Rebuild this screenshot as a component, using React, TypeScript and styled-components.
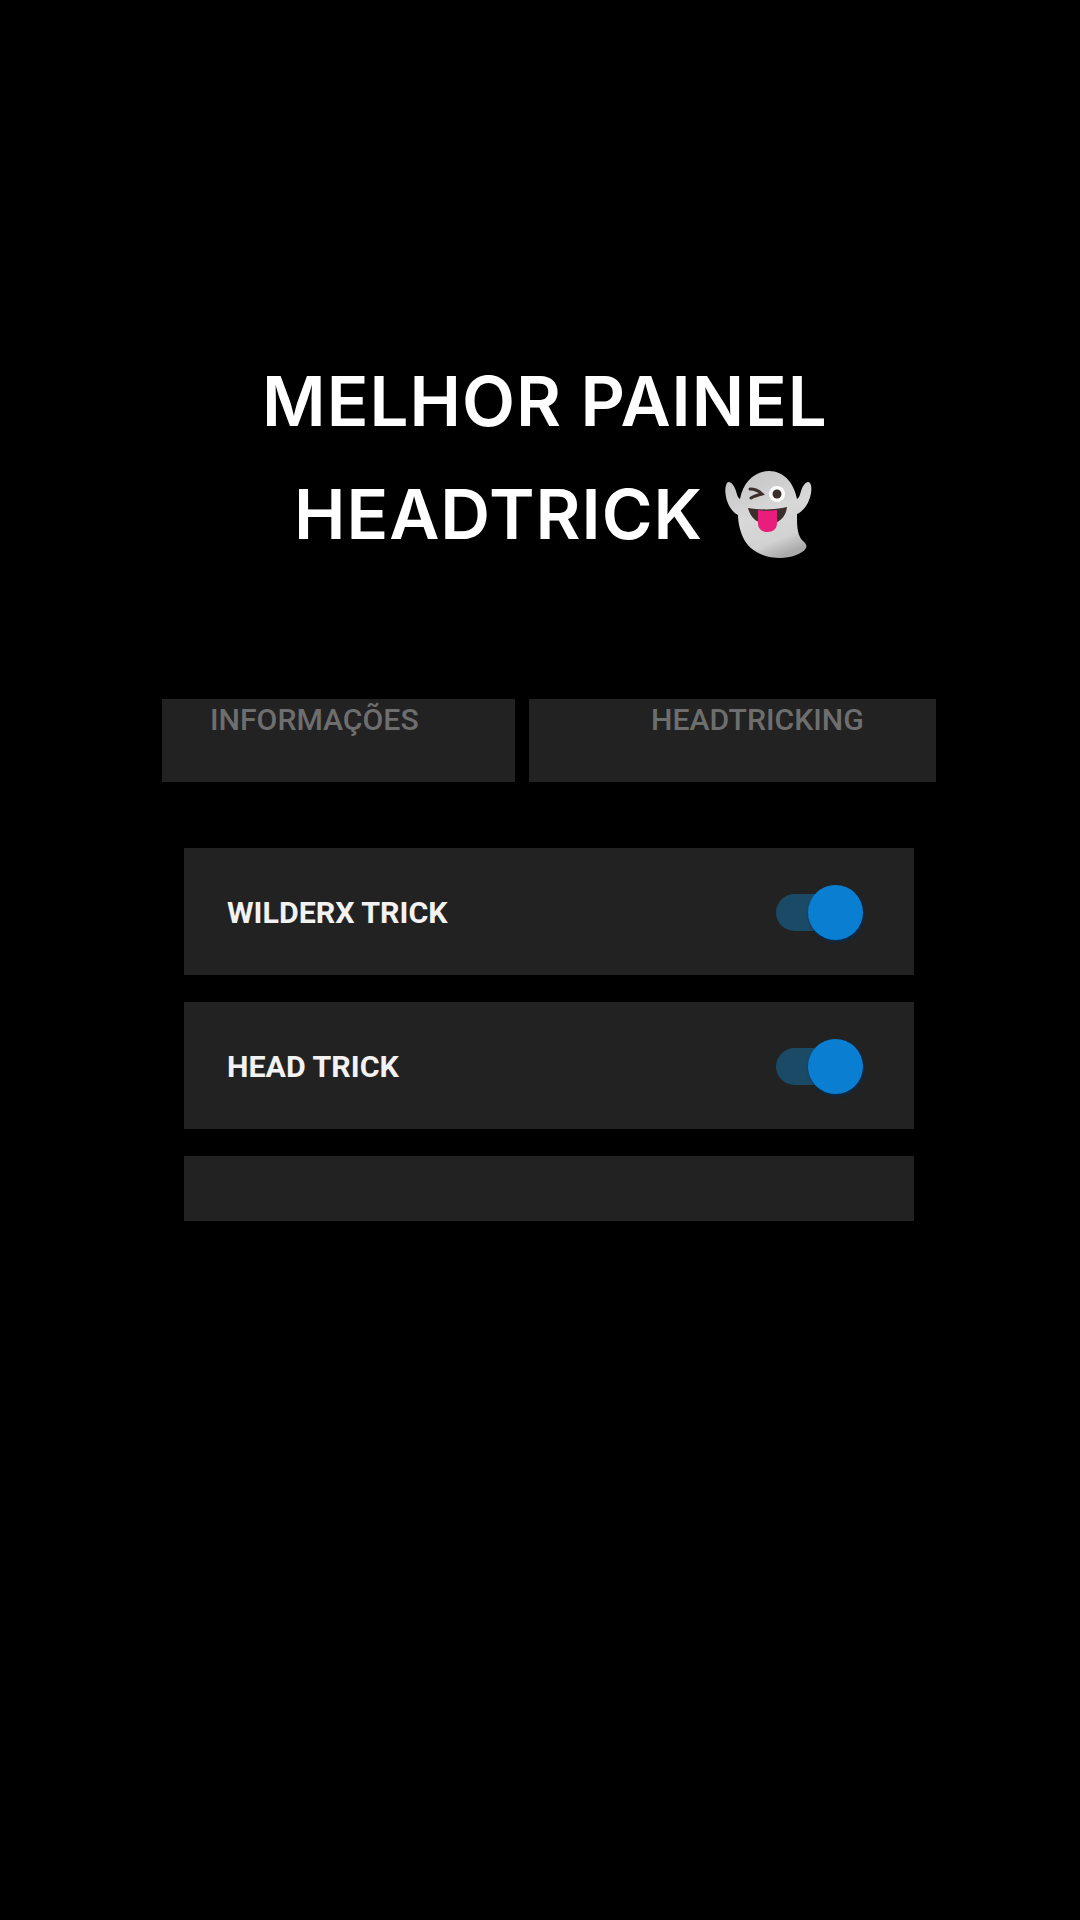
import React from 'react';
import styled, { createGlobalStyle } from 'styled-components';

const GlobalStyle = createGlobalStyle`
    html, body {
        margin: 0;
        padding: 0;
        background: #000;
    }
`;

const Screen = styled.div`
    width: 1080px;
    height: 1920px;
    background: #000;
    overflow: hidden;
    padding-top: 345px;
    box-sizing: border-box;
`;

const Title = styled.h1`
    margin: 0;
    font-family: Inter, "Liberation Sans", sans-serif;
    font-size: 69px;
    font-weight: 600;
    letter-spacing: 1px;
    line-height: 113px;
    color: #fff;
    text-align: center;
`;

const TitleLine = styled.div<{ $shift: number }>`
    display: flex;
    justify-content: center;
    align-items: center;
    gap: 20px;
    height: 113px;
    margin-left: ${(p) => p.$shift}px;
`;

const Tabs = styled.div`
    display: flex;
    gap: 14px;
    margin: 128px 0 0 162px;
`;

const Tab = styled.div<{ $width: number; $inset: number }>`
    width: ${(p) => p.$width}px;
    height: 83px;
    box-sizing: border-box;
    padding: 3px 0 0 ${(p) => p.$inset}px;
    background: #222;
    font-family: Roboto, sans-serif;
    font-size: 30.2px;
    line-height: 36px;
    font-weight: 500;
    color: #6e6e6e;
`;

const List = styled.div`
    display: flex;
    flex-direction: column;
    gap: 27px;
    width: 730px;
    margin: 66px 0 0 184px;
`;

const Row = styled.div`
    display: flex;
    align-items: center;
    justify-content: space-between;
    height: 127px;
    box-sizing: border-box;
    padding: 1px 51px 0 43px;
    background: #222;
`;

const EmptyRow = styled.div`
    height: 65px;
    background: #222;
`;

const RowLabel = styled.span`
    font-family: Roboto, sans-serif;
    font-size: 30.4px;
    font-weight: 700;
    color: #f2f2f2;
`;

const Toggle = styled.div`
    position: relative;
    width: 87px;
    height: 55px;
`;

const ToggleTrack = styled.div`
    position: absolute;
    left: 0;
    top: 9px;
    width: 80px;
    height: 37px;
    border-radius: 19px;
    background: #1b4a66;
`;

const ToggleThumb = styled.div`
    position: absolute;
    right: 0;
    top: 0;
    width: 55px;
    height: 55px;
    border-radius: 50%;
    background: #0a7fd2;
    box-shadow: 1px 2px 3px rgba(4, 45, 85, 0.9);
`;

const Ghost = () => (
    <svg width="90" height="88" viewBox="0 0 88 88">
        <defs>
            <linearGradient id="ghostBody" x1="0.2" y1="0" x2="0.6" y2="1">
                <stop offset="0" stopColor="#c4c4c4" />
                <stop offset="0.5" stopColor="#d8d8d8" />
                <stop offset="0.82" stopColor="#d2d2d2" />
                <stop offset="1" stopColor="#aaaaaa" />
            </linearGradient>
        </defs>
        <path
            d="M3 12C6 9 10 14 12 20C13 24 14 27 16 28C19 11 31 0 45 0C60 0 70 12 73 28C75 27 76 24 77 20C79 14 83 9 86 12C90 18 85 38 73 43C73 52 73 60 76 66C78 71 84 72 82 77C79 83 66 87 56 87C40 87 24 80 18 64C15 56 14 49 14 44C2 38 -1 18 3 12Z"
            fill="url(#ghostBody)"
        />
        <path d="M26 18C30 18 35 20 38 23C34 24 30 25 27 27" stroke="#3a2f2a" strokeWidth="3" strokeLinecap="round" fill="none" />
        <circle cx="53" cy="23" r="8" fill="#fff" />
        <circle cx="53" cy="23" r="4.5" fill="#3a2f2a" />
        <path d="M24 37C36 39 52 39 63 36C62 46 55 53 44 53C33 53 26 46 24 37Z" fill="#3a2f2a" />
        <path d="M34 39C40 40 47 40 53 39L53 52C53 58 49 61 43.5 61C38 61 34 58 34 52Z" fill="#e91e7c" />
    </svg>
);

const App = () => (
    <Screen>
        <GlobalStyle />
        <Title>
            <TitleLine $shift={10}>MELHOR PAINEL</TitleLine>
            <TitleLine $shift={27}>
                HEADTRICK <Ghost />
            </TitleLine>
        </Title>
        <Tabs>
            <Tab $width={353} $inset={48}>INFORMAÇÕES</Tab>
            <Tab $width={407} $inset={122}>HEADTRICKING</Tab>
        </Tabs>
        <List>
            <Row>
                <RowLabel>WILDERX TRICK</RowLabel>
                <Toggle>
                    <ToggleTrack />
                    <ToggleThumb />
                </Toggle>
            </Row>
            <Row>
                <RowLabel>HEAD TRICK</RowLabel>
                <Toggle>
                    <ToggleTrack />
                    <ToggleThumb />
                </Toggle>
            </Row>
            <EmptyRow />
        </List>
    </Screen>
);

export default App;
